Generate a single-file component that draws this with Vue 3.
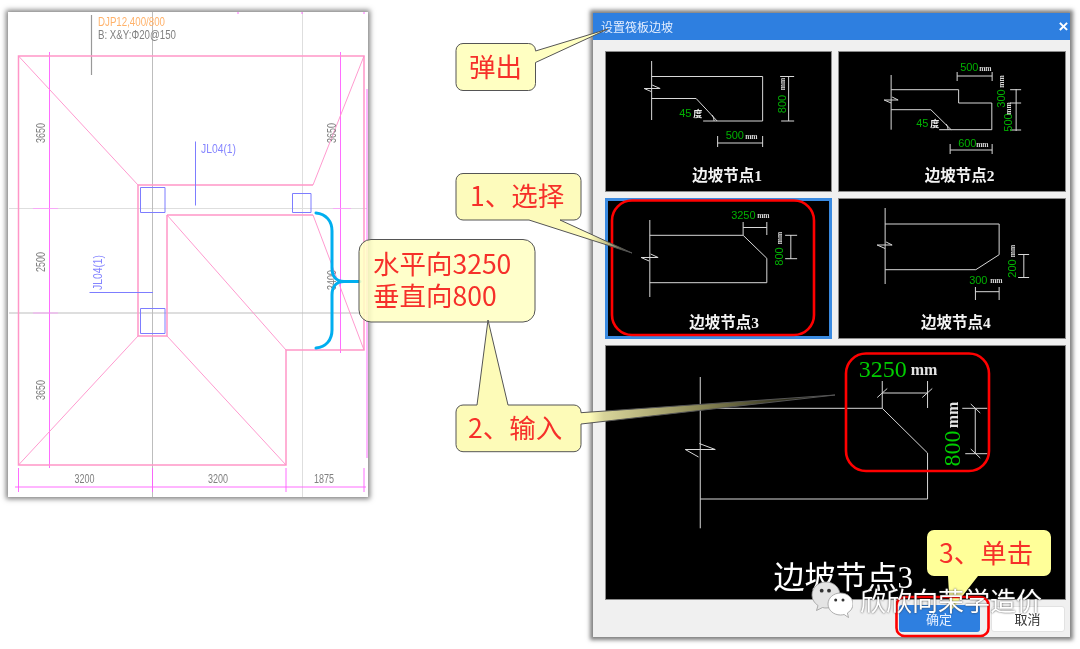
<template>
  <div class="page">
    <!-- 左侧 CAD 图 -->
    <div class="cad-panel">
      <svg class="cad" viewBox="8 12 360 485">
        <path class="axis" d="M302.5 12V497M9 208.5H367" />
        <path class="axis dark" d="M152.5 12V497M9 313H367" />
        <path class="leader" d="M91.5 15V75" />
        <path class="dim" d="M49.5 52V468M340.5 52V353M15 487H366M18.5 468V492M152.5 468V492M286 468V492M364 468V492M367 89V458M238 12V14M302 12V14M364 12V14" />
        <path class="tick" d="M33 208.5H58M333 208.5H351M33 313H58" />
        <path class="wall" d="M18.5 56H364V350H286V465H18.5ZM138 185H313M167 215H313M138 185V336H167V215" />
        <path class="slope" d="M18.5 56L138 185M364 56L313 185M167 215L286 350M313 215L364 350M138 336L18.5 465M167 336L286 465" />
        <path class="beam" d="M140.5 187.5H165V212.5H140.5ZM292.5 193.5H311V212.5H292.5ZM140.5 308.5H165V333.5H140.5ZM195.5 141.5V205.5M89.5 292.5H153" />
        <text x="98" y="26" class="cad-t orange" textLength="67" lengthAdjust="spacingAndGlyphs">DJP12,400/800</text>
        <text x="98" y="38.5" class="cad-t" textLength="78" lengthAdjust="spacingAndGlyphs">B: X&amp;Y:Φ20@150</text>
        <text x="201" y="153" class="cad-t blue" textLength="35" lengthAdjust="spacingAndGlyphs">JL04(1)</text>
        <text x="101.5" y="272.5" class="cad-t blue mid" textLength="35" lengthAdjust="spacingAndGlyphs" transform="rotate(-90 101.5 272.5)">JL04(1)</text>
        <text
          v-for="d in cadDims"
          :key="d.t + d.x + d.y"
          :x="d.x"
          :y="d.y"
          class="cad-t mid"
          textLength="20"
          lengthAdjust="spacingAndGlyphs"
          :transform="d.rot ? `rotate(-90 ${d.x} ${d.y})` : null"
        >{{ d.t }}</text>
      </svg>
    </div>

    <!-- 右侧弹窗 -->
    <div class="dialog">
      <div class="title-bar">
        <span>设置筏板边坡</span>
        <span class="close">×</span>
      </div>
      <div class="body">
        <div class="grid">
          <div
            v-for="n in nodes"
            :key="n.box"
            :class="['thumb', { active: n.active, big: n.big }]"
          >
            <svg :viewBox="n.box">
              <path class="drawing" :d="n.lines" />
              <text
                v-for="t in n.texts"
                :key="t.t + t.x + t.y"
                :x="t.x"
                :y="t.y"
                :class="t.c"
                :transform="t.rot ? `rotate(-90 ${t.x} ${t.y})` : null"
              >{{ t.t }}</text>
            </svg>
          </div>
        </div>
        <div class="footer">
          <button class="btn primary">确定</button>
          <button class="btn">取消</button>
        </div>
      </div>
    </div>

    <!-- 标注层 -->
    <svg class="notes" viewBox="0 0 1080 649">
      <defs>
        <linearGradient id="fade1" gradientUnits="userSpaceOnUse" x1="456" y1="0" x2="632" y2="0">
          <stop offset="0.76" stop-color="#fdfbbc" />
          <stop offset="0.85" stop-color="#c9c58c" />
          <stop offset="1" stop-color="#2a2a18" />
        </linearGradient>
        <linearGradient id="fade2" gradientUnits="userSpaceOnUse" x1="456" y1="0" x2="835" y2="0">
          <stop offset="0.354" stop-color="#fdfbb8" />
          <stop offset="0.39" stop-color="#d8d49a" />
          <stop offset="0.64" stop-color="#8d8a58" />
          <stop offset="0.88" stop-color="#2a2a18" />
          <stop offset="1" stop-color="#0a0a06" />
        </linearGradient>
      </defs>

      <path class="brace" d="M316 213C326 214 332 221 332 231V268C332 276 336 281.5 344 281.5H360M344 281.5C336 281.5 332 287 332 295V330C332 340 326 347 316 348" />

      <rect class="red" x="612" y="200.5" width="202" height="134.5" rx="20" />
      <rect class="red" x="846" y="353.5" width="143" height="117.5" rx="20" />

      <rect class="note translucent" x="359" y="239.5" width="176" height="82.5" rx="12" />
      <path class="note" d="M463 43.5H528.5a7 7 0 0 1 7 7V51L608 29L535.5 62.5V83.5a7 7 0 0 1 -7 7H463a7 7 0 0 1 -7 -7V50.5a7 7 0 0 1 7 -7Z" />
      <path class="note fade1" d="M463 173.5H574a7 7 0 0 1 7 7V213a7 7 0 0 1 -7 7H560L632 253L529 220H463a7 7 0 0 1 -7 -7V180.5a7 7 0 0 1 7 -7Z" />
      <path class="note fade2" d="M463 405H477L488 320L508 405H574a7 7 0 0 1 7 7V412.7L835 395L581 424V444.7a7 7 0 0 1 -7 7H463a7 7 0 0 1 -7 -7V412a7 7 0 0 1 7 -7Z" />
      <path class="note-plain" d="M934 530H1044a7 7 0 0 1 7 7V569a7 7 0 0 1 -7 7H978L950 612L948 576H934a7 7 0 0 1 -7 -7V537a7 7 0 0 1 7 -7Z" />

      <rect class="red" x="896.5" y="597" width="92" height="39" rx="8" />

      <text x="469" y="77" class="note-t">弹出</text>
      <text x="470" y="206" class="note-t">1、选择</text>
      <text x="373" y="274" class="note-t">水平向3250</text>
      <text x="373" y="306" class="note-t">垂直向800</text>
      <text x="468" y="438" class="note-t">2、输入</text>
      <text x="939" y="563" class="note-t">3、单击</text>
    </svg>

    <!-- 公众号水印 -->
    <div class="watermark">
      <svg class="wechat" viewBox="0 0 42 37">
        <path class="bubble back" d="M15 1C7 1 1 6.800 1 14C1 18.400 3.400 22 7 24.500L5.500 29.500L11.500 26.500C12.600 26.800 13.800 27 15 27C23 27 29 21.200 29 14C29 6.800 23 1 15 1Z" />
        <path class="bubble" d="M29.500 12C22.500 12 17 16.900 17 23C17 29.100 22.500 34 29.500 34C30.800 34 32 33.800 33.100 33.500L37.500 36.500L36.400 32C39.800 30 42 26.800 42 23C42 16.900 36.500 12 29.500 12Z" />
        <circle cx="10.700" cy="9.700" r="1.900" />
        <circle cx="18" cy="9.700" r="1.900" />
        <circle cx="24.700" cy="19" r="1.500" />
        <circle cx="32" cy="19" r="1.500" />
      </svg>
      <span>欣欣向荣学造价</span>
    </div>
  </div>
</template>

<script setup>
// CAD 图上的尺寸文字
const cadDims = [
  { t: '3650', x: 44.5, y: 133, rot: true },
  { t: '3650', x: 336, y: 133, rot: true },
  { t: '2500', x: 44.5, y: 262, rot: true },
  { t: '3400', x: 336, y: 280, rot: true },
  { t: '3650', x: 44.5, y: 390, rot: true },
  { t: '3200', x: 84.5, y: 483 },
  { t: '3200', x: 218, y: 483 },
  { t: '1875', x: 324, y: 483 }
]

// 四个节点缩略图 + 下方大图，坐标直接按页面坐标写
const nodes = [
  {
    box: '605 51 227 141',
    lines: 'M651.5 61V120M651.5 76.5H762.5V121H703M651.5 98.5H696L717 121M644 88.5H660M644 88.5L651 91.5M652 85L660 88.5M788.5 76V121M780 76.5H794M781 121H794M717.5 136V147M762.5 136V147M717.5 143H762.5M712 115Q714 118 714 121',
    texts: [
      { t: '800', x: 786, y: 104, c: 'green mid', rot: true },
      { t: 'mm', x: 785, y: 84, c: 'unit mid', rot: true },
      { t: '45', x: 679, y: 117, c: 'green' },
      { t: '度', x: 693, y: 117, c: 'unit cn' },
      { t: '500', x: 725.5, y: 139, c: 'green' },
      { t: 'mm', x: 745, y: 139, c: 'unit' },
      { t: '边坡节点1', x: 727, y: 181, c: 'cap' }
    ]
  },
  {
    box: '838 51 227 141',
    lines: 'M891 75V129.7M891 89.7H958.5V103H991.7V129.7H939M891 109.7H930.7L951 129.7M884 100H898M884 100L891 103M892 97L898 100M957 76H992M957 72V81M992 72V81M1016 89V131M1010 89.7H1021M1010 103H1021M1010 130H1021M950 150H992M950 144V154M992 144V154M946 124Q948 127 948 129.7',
    texts: [
      { t: '500', x: 960, y: 71, c: 'green' },
      { t: 'mm', x: 979, y: 71, c: 'unit' },
      { t: '300', x: 1004.5, y: 98.5, c: 'green mid', rot: true },
      { t: 'mm', x: 1004, y: 81.5, c: 'unit mid', rot: true },
      { t: '500', x: 1012, y: 122.5, c: 'green mid', rot: true },
      { t: 'mm', x: 1011, y: 108.5, c: 'unit mid', rot: true },
      { t: '45', x: 916, y: 127, c: 'green' },
      { t: '度', x: 930, y: 127, c: 'unit cn' },
      { t: '600', x: 958, y: 147, c: 'green' },
      { t: 'mm', x: 976, y: 147, c: 'unit' },
      { t: '边坡节点2', x: 959.5, y: 181, c: 'cap' }
    ]
  },
  {
    box: '605 198 227 141',
    active: true,
    lines: 'M649.7 220V297M649.7 235.3H743L766.7 258.3V282.7H649.7M641 257.5H658M641 257.5L649 261M650.5 254L658 257.5M743 222V235M766.7 222V235M743 227.5H766.7M790.7 235V259M785 235.3H797M785 258.7H797',
    texts: [
      { t: '3250', x: 731, y: 219, c: 'green' },
      { t: 'mm', x: 757, y: 218, c: 'unit' },
      { t: '800', x: 783, y: 256.5, c: 'green mid', rot: true },
      { t: 'mm', x: 782, y: 238, c: 'unit mid', rot: true },
      { t: '边坡节点3', x: 724, y: 328, c: 'cap' }
    ]
  },
  {
    box: '838 198 227 141',
    lines: 'M885 208V284M885 224H999V254.7L975.7 269.7H885M877 245H892M877 245L885 248.5M886 242L892 245M1023.7 254V278M1018 254.5H1029M1018 277.5H1029M975.3 287V300M999 287V300M975.3 291.7H999',
    texts: [
      { t: '200', x: 1016, y: 268.5, c: 'green mid', rot: true },
      { t: 'mm', x: 1015, y: 251, c: 'unit mid', rot: true },
      { t: '300', x: 969, y: 283.5, c: 'green' },
      { t: 'mm', x: 990, y: 283, c: 'unit' },
      { t: '边坡节点4', x: 955.8, y: 328, c: 'cap' }
    ]
  },
  {
    box: '605 345 460 255',
    big: true,
    lines: 'M700 377V528.3M700 408.3H882L927.3 453V499H700M685 449.5H715M685 449.5L698.3 457M699 443.5L715 449.5M882 381V408M927.3 381V408M882 393H927.3M877 397.5L887 388.5M922 397.5L932 388.5M975 408V453.5M962 408.3H987M965 453.7H987M970.5 404L980 413M970.5 449L980 458',
    texts: [
      { t: '3250', x: 858.5, y: 376.5, c: 'green large' },
      { t: 'mm', x: 910.5, y: 375, c: 'unit large' },
      { t: '800', x: 960, y: 448.5, c: 'green large mid', rot: true },
      { t: 'mm', x: 958, y: 415, c: 'unit large mid', rot: true },
      { t: '边坡节点3', x: 843, y: 588, c: 'cap large' }
    ]
  }
]
</script>

<style>
html,
body {
  background: #fff;
}
</style>

<style scoped>
.page {
  position: relative;
  width: 1080px;
  height: 649px;
  overflow: hidden;
  background: #fff;
  font-family: "Noto Sans CJK SC", "Liberation Sans", sans-serif;
  filter: blur(0.35px);
}

/* 左侧 CAD 图 */
.cad-panel {
  position: absolute;
  left: 8px;
  top: 12px;
  width: 360px;
  height: 485px;
  background: #fff;
  box-shadow: 0 0 5px 2px rgba(0, 0, 0, 0.5);
}

.cad {
  display: block;
  width: 100%;
  height: 100%;
}

.cad path {
  fill: none;
}

.axis {
  stroke: #dedede;
  stroke-width: 1;
}

.axis.dark {
  stroke: #bdbdbd;
}

.leader {
  stroke: #999;
  stroke-width: 1.2;
}

.dim {
  stroke: #ff5cff;
  stroke-width: 0.9;
}

.tick {
  stroke: #ff9cff;
  stroke-width: 0.8;
}

.wall {
  stroke: #ff96c8;
  stroke-width: 1.5;
}

.slope {
  stroke: #ff8fca;
  stroke-width: 0.9;
}

.beam {
  stroke: #7d7dff;
  stroke-width: 1;
}

.cad-t {
  font-family: "Liberation Sans", sans-serif;
  font-size: 12px;
  fill: #808080;
}

.cad-t.orange {
  fill: #ffb26b;
}

.cad-t.blue {
  fill: #8585ff;
}

.mid {
  text-anchor: middle;
}

/* 弹窗 */
.dialog {
  position: absolute;
  left: 593px;
  top: 13px;
  width: 476.5px;
  height: 624px;
  display: flex;
  flex-direction: column;
  background: #f0f0f0;
  box-shadow: 0 0 4px 3px rgba(0, 0, 0, 0.5);
}

.title-bar {
  display: flex;
  justify-content: space-between;
  align-items: center;
  height: 27px;
  flex-shrink: 0;
  padding: 0 1px 0 8px;
  background: #2e7fe0;
  color: #e4eeff;
  font-size: 12px;
}

.close {
  color: #fff;
  font-family: "Liberation Sans", sans-serif;
  font-size: 17px;
  font-weight: 700;
  line-height: 1;
}

.body {
  flex: 1;
  display: flex;
  flex-direction: column;
  padding: 11px 4px 0 12px;
}

.grid {
  display: grid;
  grid-template-columns: 1fr 1fr;
  grid-template-rows: 141px 141px 255px;
  gap: 6px;
}

.thumb {
  background: #000;
  outline: 1px solid #8a8a8a;
  outline-offset: -1px;
}

.thumb.active {
  outline: 3px solid #3a8ae0;
  outline-offset: -3px;
}

.thumb.big {
  grid-column: 1 / span 2;
}

.thumb svg {
  display: block;
  width: 100%;
  height: 100%;
}

.drawing {
  fill: none;
  stroke: #d8d8d8;
  stroke-width: 1;
}

.green {
  font-family: "Liberation Sans", sans-serif;
  font-size: 11px;
  fill: #00b000;
}

.green.large {
  font-family: "Liberation Serif", serif;
  font-size: 24px;
  fill: #00cc00;
}

.unit {
  font-family: "Liberation Serif", serif;
  font-size: 7.5px;
  font-weight: 700;
  fill: #d8d8d8;
}

.unit.cn {
  font-family: "Noto Sans CJK SC", sans-serif;
  font-size: 9px;
  fill: #eee;
}

.unit.large {
  font-size: 16px;
  fill: #e4e4e4;
}

.cap {
  font-family: "Liberation Serif", "Noto Sans CJK SC", serif;
  font-size: 15.5px;
  font-weight: 700;
  fill: #f4f4f4;
  text-anchor: middle;
}

.cap.large {
  font-size: 31px;
  font-weight: 400;
  fill: #fff;
}

.footer {
  display: flex;
  justify-content: flex-end;
  align-items: center;
  gap: 11px;
  padding: 5px 1px 0 0;
}

.btn {
  width: 74px;
  height: 26px;
  padding: 0;
  border: 1px solid #e2e2e2;
  border-radius: 3px;
  background: #fff;
  color: #333;
  font-family: "Noto Sans CJK SC", sans-serif;
  font-size: 13px;
}

.btn.primary {
  width: 81px;
  height: 27px;
  border: none;
  background: #2e7fe0;
  color: #e8f1ff;
}

/* 标注层 */
.notes {
  position: absolute;
  left: 0;
  top: 0;
  width: 1080px;
  height: 649px;
}

.brace {
  fill: none;
  stroke: #00aeef;
  stroke-width: 3;
  stroke-linecap: round;
}

.red {
  fill: none;
  stroke: #f00;
  stroke-width: 2.6;
}

.note {
  fill: #ffffc2;
  stroke: #555;
  stroke-width: 1;
}

.note.translucent {
  fill-opacity: 0.86;
}

.note.fade1 {
  fill: url(#fade1);
}

.note.fade2 {
  fill: url(#fade2);
}

.note-plain {
  fill: #ffff99;
}

.note-t {
  font-family: "Noto Sans CJK SC", sans-serif;
  font-size: 26.5px;
  fill: #f6302a;
}

/* 水印 */
.watermark {
  position: absolute;
  left: 811px;
  top: 581px;
  display: flex;
  align-items: center;
  gap: 7px;
  color: #fff;
  font-size: 26px;
  line-height: 37px;
  text-shadow: 0 0 2px #333;
}

.wechat {
  width: 42px;
  height: 37px;
  flex-shrink: 0;
}

.bubble {
  fill: #fff;
  stroke: #9a9a9a;
  stroke-width: 0.8;
}

.bubble.back {
  fill: #e4e4e4;
}

.wechat circle {
  fill: #333;
}
</style>
